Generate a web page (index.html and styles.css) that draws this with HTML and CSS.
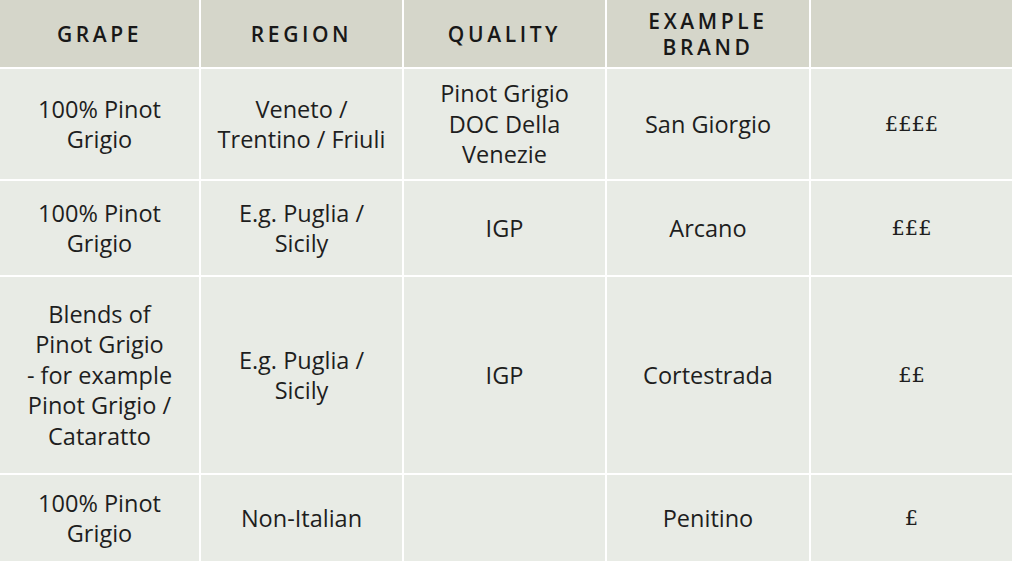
FILE: index.html
```html
<!DOCTYPE html>
<html>
<head>
<meta charset="utf-8">
<link rel="stylesheet" href="styles.css">
</head>
<body>
<div class="table">
  <div class="cell head">Grape</div>
  <div class="cell head">Region</div>
  <div class="cell head">Quality</div>
  <div class="cell head">Example<br>Brand</div>
  <div class="cell head"></div>

  <div class="cell">100% Pinot<br>Grigio</div>
  <div class="cell">Veneto /<br>Trentino / Friuli</div>
  <div class="cell">Pinot Grigio<br>DOC Della<br>Venezie</div>
  <div class="cell">San Giorgio</div>
  <div class="cell price">££££</div>

  <div class="cell">100% Pinot<br>Grigio</div>
  <div class="cell">E.g. Puglia /<br>Sicily</div>
  <div class="cell">IGP</div>
  <div class="cell">Arcano</div>
  <div class="cell price">£££</div>

  <div class="cell">Blends of<br>Pinot Grigio<br>- for example<br>Pinot Grigio /<br>Cataratto</div>
  <div class="cell">E.g. Puglia /<br>Sicily</div>
  <div class="cell">IGP</div>
  <div class="cell">Cortestrada</div>
  <div class="cell price">££</div>

  <div class="cell">100% Pinot<br>Grigio</div>
  <div class="cell">Non-Italian</div>
  <div class="cell"></div>
  <div class="cell">Penitino</div>
  <div class="cell price">£</div>
</div>
</body>
</html>
```

FILE: styles.css
```css
html, body {
  margin: 0;
  padding: 0;
  background: #ffffff;
}
body {
  width: 1012px;
  height: 563px;
  overflow: hidden;
}
.table {
  display: grid;
  grid-template-columns: 199px 201px 201px 202px 1fr;
  grid-template-rows: 67px 110px 94px 196px 86px;
  column-gap: 2px;
  row-gap: 2px;
  padding-bottom: 2px;
  background: #ffffff;
  font-family: "Open Sans", "Lato", sans-serif;
  color: #1e1e1e;
}
.cell {
  background: #e8ebe5;
  display: flex;
  align-items: center;
  justify-content: center;
  text-align: center;
  font-size: 23.5px;
  line-height: 30.5px;
  font-weight: 400;
}
.head {
  background: #d5d6ca;
  text-transform: uppercase;
  font-size: 21px;
  letter-spacing: 3.6px;
  line-height: 26px;
  font-weight: 600;
  color: #181818;
}
.price {
  font-family: "DejaVu Serif", "Liberation Serif", serif;
  font-size: 21px;
}
```
